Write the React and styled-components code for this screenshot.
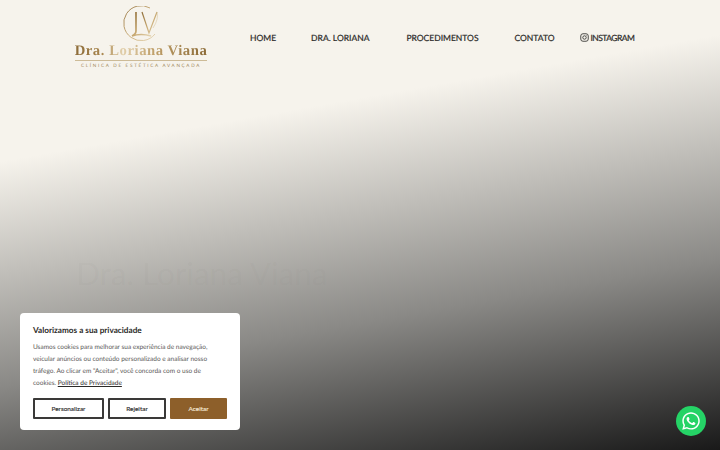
import React from "react";
import styled, { createGlobalStyle } from "styled-components";
import { FaWhatsapp } from "react-icons/fa";

const GlobalStyle = createGlobalStyle`
  html, body {
    margin: 0;
    height: 100%;
    overflow: hidden;
  }
  body {
    font-family: "Lato", "Open Sans", sans-serif;
    text-rendering: geometricPrecision;
    background: #f6f3ec;
  }
`;

const Page = styled.div`
  position: relative;
  width: 720px;
  height: 450px;
  overflow: hidden;
  background: linear-gradient(170deg, #f6f3ec 0%, #f6f3ec 28%, #8a8986 67%, #191919 100%);
`;

const Header = styled.header`
  display: flex;
  align-items: flex-start;
  height: 75px;
  padding-left: 74px;
`;

const Logo = styled.a`
  display: flex;
  flex-direction: column;
  align-items: center;
  width: 134px;
  padding-top: 6px;
`;

const LogoName = styled.span`
  margin-top: -1px;
  font-family: "Liberation Serif", serif;
  font-weight: 700;
  font-size: 14.7px;
  line-height: 17px;
  letter-spacing: 0.55px;
  white-space: nowrap;
  color: transparent;
  background: linear-gradient(90deg, #8c6b38 0%, #a8854d 20%, #e2d0ac 36%, #c0a06a 60%, #8b6a36 100%);
  -webkit-background-clip: text;
  background-clip: text;
`;

const LogoTag = styled.span`
  width: 132px;
  padding-top: 1px;
  border-top: 1px solid #cdbb97;
  font-size: 4.6px;
  line-height: 6px;
  letter-spacing: 1.7px;
  text-align: center;
  white-space: nowrap;
  color: #a08656;
`;

const Nav = styled.nav`
  display: flex;
  align-items: center;
  height: 75px;
  margin-left: 42px;
`;

const NavLink = styled.a`
  display: flex;
  align-items: center;
  gap: 2px;
  margin-left: ${(p) => p.$gap}px;
  font-size: 8.5px;
  font-weight: 400;
  letter-spacing: ${(p) => (p.$tight ? "-0.55px" : "0")};
  -webkit-text-stroke: 0.2px #2b2a28;
  color: #2b2a28;
  white-space: nowrap;
`;

const Hero = styled.section`
  padding: 141px 0 0 76px;
`;

const HeroSub = styled.div`
  font-size: 22px;
  line-height: 30px;
  color: rgba(120, 118, 112, 0.025);
`;

const HeroTitle = styled.h1`
  margin: 6px 0 0;
  font-size: 31.5px;
  line-height: 42px;
  font-weight: 400;
  color: rgba(110, 108, 102, 0.05);
`;

const CookieCard = styled.div`
  position: absolute;
  left: 20px;
  top: 313px;
  box-sizing: border-box;
  width: 220px;
  height: 117px;
  padding: 11px 13px 0;
  background: #fff;
  border-radius: 4px;
`;

const CookieTitle = styled.h3`
  margin: 0;
  font-size: 8.2px;
  line-height: 12px;
  font-weight: 700;
  color: #2c2a28;
`;

const CookieText = styled.p`
  margin: 6px 0 0;
  font-size: 6.5px;
  line-height: 12px;
  color: #5a5957;
  white-space: nowrap;

  a {
    color: #2c2a28;
    text-decoration: underline;
  }
`;

const CookieActions = styled.div`
  display: flex;
  gap: 4px;
  margin-top: 8px;
`;

const CookieButton = styled.button`
  box-sizing: border-box;
  flex: none;
  width: ${(p) => p.$w}px;
  height: 21px;
  padding: 0;
  border: ${(p) => (p.$primary ? "none" : "2px solid #3a3938")};
  border-radius: 1px;
  background: ${(p) => (p.$primary ? "#8d5f2a" : "#fff")};
  color: ${(p) => (p.$primary ? "#f4e7d4" : "#333")};
  font-family: inherit;
  font-size: 6.4px;
  font-weight: 400;
  -webkit-text-stroke: 0.15px currentColor;
`;

const WhatsApp = styled.a`
  position: absolute;
  right: 14px;
  bottom: 14px;
  display: flex;
  align-items: center;
  justify-content: center;
  width: 30px;
  height: 30px;
  border-radius: 50%;
  background: #25d366;
  color: #fff;
`;

const InstagramIcon = () => (
  <svg width="9" height="9" viewBox="0 0 24 24" fill="none" stroke="#2b2a28" strokeWidth="2.2">
    <rect x="2" y="2" width="20" height="20" rx="6" />
    <circle cx="12" cy="12" r="4.6" />
    <circle cx="17.6" cy="6.4" r="1" fill="#2b2a28" stroke="none" />
  </svg>
);

const Monogram = () => (
  <svg width="48" height="38" viewBox="0 0 48 38">
    <defs>
      <linearGradient id="gold" x1="0" y1="0" x2="1" y2="1">
        <stop offset="0" stopColor="#8f6d38" />
        <stop offset="0.55" stopColor="#c9ab74" />
        <stop offset="1" stopColor="#e5d5b3" />
      </linearGradient>
    </defs>
    <path d="M33 2 A17.5 17.5 0 1 0 38 28" fill="none" stroke="url(#gold)" strokeWidth="0.9" />
    <path d="M19 6 V25 Q19 28 15 30 Q24 27 34 30" fill="none" stroke="url(#gold)" strokeWidth="1.7" />
    <path d="M25 6 L32 27 L40 6" fill="none" stroke="url(#gold)" strokeWidth="1.2" />
    <path d="M15 6 H23 M23 6 H28" stroke="url(#gold)" strokeWidth="0.7" />
    <path d="M40 6 Q42 13 36 22" fill="none" stroke="#d9c7a3" strokeWidth="0.6" />
  </svg>
);

const App = () => {
  return (
    <Page>
      <GlobalStyle />
      <Header>
        <Logo>
          <Monogram />
          <LogoName>Dra. Loriana Viana</LogoName>
          <LogoTag>CLÍNICA DE ESTÉTICA AVANÇADA</LogoTag>
        </Logo>
        <Nav>
          <NavLink $gap={0}>HOME</NavLink>
          <NavLink $gap={35}>DRA. LORIANA</NavLink>
          <NavLink $gap={37}>PROCEDIMENTOS</NavLink>
          <NavLink $gap={36}>CONTATO</NavLink>
          <NavLink $gap={25} $tight>
            <InstagramIcon />
            INSTAGRAM
          </NavLink>
        </Nav>
      </Header>
      <Hero>
        <HeroSub>Clínica de Estética</HeroSub>
        <HeroTitle>Dra. Loriana Viana</HeroTitle>
      </Hero>
      <CookieCard>
        <CookieTitle>Valorizamos a sua privacidade</CookieTitle>
        <CookieText>
          Usamos cookies para melhorar sua experiência de navegação,
          <br />
          veicular anúncios ou conteúdo personalizado e analisar nosso
          <br />
          tráfego. Ao clicar em "Aceitar", você concorda com o uso de
          <br />
          cookies. <a>Política de Privacidade</a>
        </CookieText>
        <CookieActions>
          <CookieButton $w={71}>Personalizar</CookieButton>
          <CookieButton $w={58}>Rejeitar</CookieButton>
          <CookieButton $w={57} $primary>Aceitar</CookieButton>
        </CookieActions>
      </CookieCard>
      <WhatsApp>
        <FaWhatsapp size={20} />
      </WhatsApp>
    </Page>
  );
};

export default App;
